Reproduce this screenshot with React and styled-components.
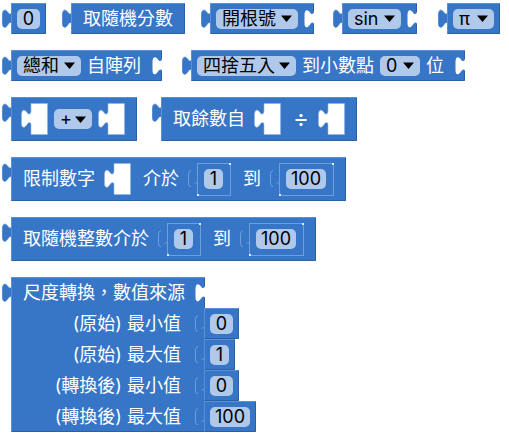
import React from "react";
import styled, { createGlobalStyle, css } from "styled-components";

const BLUE = "#3776c6";
const LIGHT = "#5a91d6";
const DARK = "#2c60a6";
const FIELD = "#b0c9ea";

const GlobalStyle = createGlobalStyle`
  * { box-sizing: border-box; }
  body { margin: 0; background: #fff; }
`;

const fieldText = css`
  font-family: Inter, "Noto Sans CJK TC", sans-serif;
  font-size: 18px;
  line-height: 20px;
  color: #000;
`;

const Workspace = styled.main`
  display: flex;
  flex-direction: column;
  align-items: flex-start;
  gap: 16px;
  padding: 3px 2px 4px;
  font-family: Inter, "Noto Sans CJK TC", sans-serif;
  font-size: 18px;
  line-height: 20px;
  color: #fff;
`;

const Row = styled.div`
  display: flex;
  align-items: flex-start;
`;

const BlockShell = styled.div`
  display: flex;
  align-items: flex-start;
  flex: none;
  margin-left: ${(p) => p.$lead || 0}px;
`;

const BlockBody = styled.div`
  display: flex;
  align-items: center;
  height: ${(p) => (p.$tall ? 44 : 31)}px;
  padding-left: ${(p) => p.$start || 0}px;
  padding-right: ${(p) => p.$end || 0}px;
  background: ${BLUE};
  border-radius: 1px;
  box-shadow: inset 1px 1px ${LIGHT}, inset -1px -1px ${DARK};
  white-space: nowrap;
`;

const TabSvg = styled.svg`
  display: block;
  flex: none;
  width: 10px;
  height: 21px;
  margin: 5px -1px 0 0;
`;

const NotchSvg = styled.svg`
  display: block;
  flex: none;
  align-self: flex-start;
  width: 10px;
  height: 21px;
  margin-top: 5px;
  margin-left: ${(p) => p.$gap || 0}px;
`;

const SocketSvg = styled.svg`
  display: block;
  flex: none;
  width: 27px;
  height: 32px;
`;

const Label = styled.span`
  margin-left: ${(p) => (p.$tight ? 0 : 12)}px;
  margin-right: ${(p) => (p.$tight ? 0 : 9)}px;
`;

const Operator = styled(Label)`
  font-size: 24px;
`;

const NumberInput = styled.input.attrs({ type: "text", inputMode: "numeric" })`
  ${fieldText}
  display: block;
  width: ${(p) => p.$w}px;
  height: 20px;
  margin: 0 6px;
  padding: 0;
  border: 0;
  border-radius: 5px;
  background: ${FIELD};
  text-align: center;
`;

const SelectWrap = styled.label`
  display: grid;
  align-items: center;
  width: ${(p) => p.$w}px;
  margin: 0 6px;
  > * { grid-area: 1 / 1; }
`;

const Select = styled.select`
  ${fieldText}
  appearance: none;
  width: 100%;
  height: 20px;
  margin: 0;
  padding: 0 0 0 6px;
  border: 0;
  border-radius: 5px;
  background: ${FIELD};
`;

const Caret = styled.svg`
  justify-self: end;
  width: 11px;
  height: 7px;
  margin-right: 6px;
  pointer-events: none;
`;

const NestedShell = styled.div`
  display: flex;
  align-items: flex-start;
`;

const NestedBody = styled.div`
  position: relative;
  display: flex;
  align-items: center;
  height: 33px;
  padding-right: 1px;
  border: 1px solid #6f9fdb;

  &::before,
  &::after {
    content: "";
    position: absolute;
    width: 2px;
    height: 2px;
    background: #e4eefa;
  }
  &::before { top: -1px; right: -1px; }
  &::after { bottom: -1px; left: -1px; }
`;

const ScaleBody = styled.div`
  width: 194px;
  display: flex;
  flex-direction: column;
  background: ${BLUE};
  box-shadow: inset 1px 1px ${LIGHT}, inset -1px -1px ${DARK};
`;

const ScaleHead = styled.div`
  display: flex;
  align-items: center;
  justify-content: space-between;
  height: 31px;
`;

const ScaleRow = styled.div`
  display: flex;
  align-items: center;
  justify-content: flex-end;
  height: 31px;
  padding-right: 24px;
  white-space: nowrap;
`;

const ScaleValues = styled.div`
  display: flex;
  flex-direction: column;
  margin: 31px 0 0 -10px;
`;

const TAB =
  "M10 17 C10 13.5 7.5 14 6 16.5 C3.5 20.5 .5 20.5 .5 15 V7 C.5 1 3.5 1 6 4.5 C7.5 7 10 6.5 10 3";

const Tab = ({ joined }) => (
  <TabSvg viewBox="0 0 10 21" aria-hidden="true">
    <path d={TAB + "Z"} fill={BLUE} />
    {joined ? (
      <path
        d="M3 18.6 C1.3 18.6 .5 17.5 .5 15 V7 C.5 4.5 1.3 3 3 2.6 M6.5 15.6 C8 13.8 9.5 14.5 9.5 17"
        fill="none"
        stroke="#6f9fdb"
      />
    ) : (
      <path d={TAB} fill="none" stroke="#4680cb" strokeWidth=".8" />
    )}
  </TabSvg>
);

const Notch = ({ gap }) => (
  <NotchSvg viewBox="0 0 10 21" $gap={gap} aria-hidden="true">
    <path d={TAB + "Z"} fill="#fff" />
  </NotchSvg>
);

const Socket = () => (
  <SocketSvg viewBox="0 0 27 32" aria-hidden="true">
    <path
      d="M10 .5 H26.5 V31.5 H10 V22 C10 18.5 7.5 19 6 21.5 C3.5 25.5 .5 25.5 .5 20 V12 C.5 6 3.5 6 6 9.5 C7.5 12 10 11.5 10 8 Z"
      fill="#fff"
      stroke="#8fb5e5"
      strokeWidth=".6"
    />
  </SocketSvg>
);

const Block = ({ lead, tall, start, end, children }) => (
  <BlockShell $lead={lead}>
    <Tab />
    <BlockBody $tall={tall} $start={start} $end={end}>
      {children}
    </BlockBody>
  </BlockShell>
);

const Num = ({ value, w, label }) => (
  <NumberInput defaultValue={value} $w={w} aria-label={label} />
);

const Nested = ({ value, w, label }) => (
  <NestedShell>
    <Tab joined />
    <NestedBody>
      <Num value={value} w={w} label={label} />
    </NestedBody>
  </NestedShell>
);

const Dropdown = ({ options, w, label }) => (
  <SelectWrap $w={w}>
    <Select aria-label={label}>
      {options.map((o) => (
        <option key={o}>{o}</option>
      ))}
    </Select>
    <Caret viewBox="0 0 11 7" aria-hidden="true">
      <path d="M0 .5H11L5.5 7Z" fill="#000" />
    </Caret>
  </SelectWrap>
);

const scaleInputs = [
  { text: "(原始) 最小值", value: "0", w: 23 },
  { text: "(原始) 最大值", value: "1", w: 19 },
  { text: "(轉換後) 最小值", value: "0", w: 23 },
  { text: "(轉換後) 最大值", value: "100", w: 40 },
];

export default function App() {
  return (
    <>
      <GlobalStyle />
      <Workspace>
        <Row>
          <Block><Num value="0" w={23} label="數字" /></Block>
          <Block lead={16} end={3}><Label>取隨機分數</Label></Block>
          <Block lead={16}>
            <Dropdown options={["開根號"]} w={82} label="運算" />
            <Notch />
          </Block>
          <Block lead={19}>
            <Dropdown options={["sin", "cos", "tan"]} w={53} label="三角函數" />
            <Notch />
          </Block>
          <Block lead={21}>
            <Dropdown options={["π", "e"]} w={41} label="常數" />
          </Block>
        </Row>

        <Row>
          <Block>
            <Dropdown options={["總和"]} w={64} label="統計" />
            <Label $tight>自陣列</Label>
            <Notch gap={11} />
          </Block>
          <Block lead={20}>
            <Dropdown options={["四捨五入"]} w={99} label="取整" />
            <Label $tight>到小數點</Label>
            <Dropdown options={["0", "1", "2"]} w={40} label="位數" />
            <Label $tight>位</Label>
            <Notch gap={11} />
          </Block>
        </Row>

        <Row>
          <Block tall start={10} end={12}>
            <Socket />
            <Dropdown options={["+", "-", "×", "÷"]} w={38} label="運算子" />
            <Socket />
          </Block>
          <Block lead={15} tall end={12}>
            <Label>取餘數自</Label>
            <Socket />
            <Operator>÷</Operator>
            <Socket />
          </Block>
        </Row>

        <Block tall end={12}>
          <Label>限制數字</Label>
          <Socket />
          <Label>介於</Label>
          <Nested value="1" w={19} label="下限" />
          <Label>到</Label>
          <Nested value="100" w={40} label="上限" />
        </Block>

        <Block tall end={12}>
          <Label>取隨機整數介於</Label>
          <Nested value="1" w={19} label="最小整數" />
          <Label>到</Label>
          <Nested value="100" w={40} label="最大整數" />
        </Block>

        <BlockShell>
          <Tab />
          <ScaleBody>
            <ScaleHead>
              <Label>尺度轉換，數值來源</Label>
              <Notch />
            </ScaleHead>
            {scaleInputs.map((s) => (
              <ScaleRow key={s.text}>{s.text}</ScaleRow>
            ))}
          </ScaleBody>
          <ScaleValues>
            {scaleInputs.map((s) => (
              <NestedShell key={s.text}>
                <Tab joined />
                <BlockBody>
                  <Num value={s.value} w={s.w} label={s.text} />
                </BlockBody>
              </NestedShell>
            ))}
          </ScaleValues>
        </BlockShell>
      </Workspace>
    </>
  );
}
